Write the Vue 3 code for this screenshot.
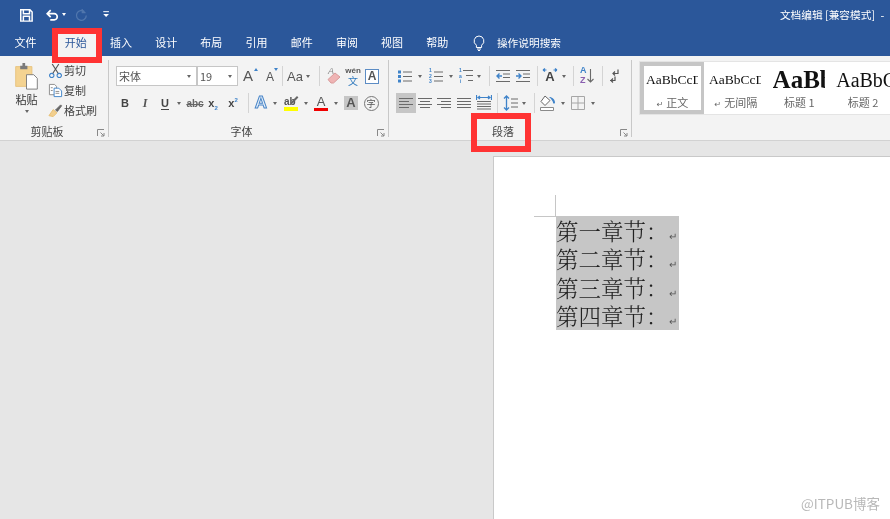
<script setup>
import { h } from 'vue'

const G = '#6a6a6a', B = '#3f83c9', L = '#8a8a8a'
const lines4 = (a, b) => `M${a} 3.5h${b} M${a} 6.5h${b} M${a} 9.5h${b} M${a} 12.5h${b}`
const icons = {
  save: [['#fff', 'none', 'M2 2h10.5L15 4.5V15H2z M5 2v4.5h7V2 M5 15V9.5h7V15', 1.7]],
  undo: [['#fff', 'none', 'M3 6.5h7.5a3.5 3.5 0 0 1 0 7H6 M6.5 2.5 2.5 6.5l4 4', 1.9]],
  redo: [['#5076ad', 'none', 'M12 4.2A5.6 5.6 0 1 0 14 8.5 M9.5 1.5v3.7h3.7', 1.5]],
  custom: [['#fff', 'none', 'M4 4.5h7', 1.2], ['none', '#fff', 'M4 7.5h7L7.5 11z']],
  bulb: [['#fff', 'none', 'M8 1a5 5 0 0 0-2.6 9.2V12.5h5.2v-2.3A5 5 0 0 0 8 1z M6 14h4 M7 15.5h2']],
  cut: [[B, 'none', 'M4 11a2.3 2.3 0 1 0 .01 0 M12 11a2.3 2.3 0 1 0 .01 0', 1.2], ['#555', 'none', 'M5.2 11 11.5 1 M10.8 11 4.5 1', 1.2]],
  copy: [[L, '#fff', 'M1.5 1.5h5.5l2 2v9H1.5z'], [B, '#fff', 'M6.5 5.5h5l3 3v6h-8z'], [L, 'none', 'M3 5h2 M3 8h2 M8 9h4 M8 11h4']],
  brush: [['#e8bf73', '#f2cf8e', 'M1 13.5 5.5 7l4 3.5-4 4z'], ['#666', '#666', 'M8 7.5 13.5 2l1 1L10 9z']],
  eraser: [['#d99a9a', '#efb4b4', 'M2 11.500 9 5l5 4-6.500 6H5z']],
  list: [['none', B, 'M1 2.5h3v3H1z M1 7h3v3H1z M1 11.500h3v3H1z'], [G, 'none', 'M6 4h9 M6 8.500h9 M6 13h9']],
  num: [[G, 'none', 'M6 4h9 M6 8.500h9 M6 13h9']],
  multi: [[G, 'none', 'M5 2.500h10 M8 7.500h7 M10 12.500h5']],
  dec: [[G, 'none', 'M1 2.500h14 M8 6h7 M8 9.500h7 M1 13.500h14'], [B, 'none', 'M7 8H2 M4.500 5.500 2 8l2.500 2.500', 1.4]],
  inc: [[G, 'none', 'M1 2.500h14 M8 6h7 M8 9.500h7 M1 13.500h14'], [B, 'none', 'M1 8h5 M3.500 5.500 6 8l-2.500 2.500', 1.4]],
  aspace: [[B, 'none', 'M1 2 4.500 2 M1 2l2-1.500M1 2l2 1.500 M15 2h-3.500 M15 2l-2-1.500M15 2l-2 1.500', 1.2]],
  sortar: [[G, 'none', 'M11.500 1v13 M8.500 11l3 3 3-3', 1.1]],
  pil: [['#555', 'none', 'M10 1.500v4H5 M7 3.500 5 5.500l2 2 M7 8.500v4H2 M5 10.500l-2 2 2 2', 1.2]],
  left: [[G, 'none', 'M1 3.500h14 M1 6.500h10 M1 9.500h14 M1 12.500h10']],
  center: [[G, 'none', 'M1 3.500h14 M3 6.500h10 M1 9.500h14 M3 12.500h10']],
  right: [[G, 'none', 'M1 3.500h14 M5 6.500h10 M1 9.500h14 M5 12.500h10']],
  just: [[G, 'none', lines4(1, 14)]],
  dist: [[B, 'none', 'M.5 0v5 M15.500 0v5 M2 2.500h12 M4 1 2 2.500 4 4 M12 1l2 1.500L12 4', 1.2], [G, 'none', 'M1 6.500h14 M1 9h14 M1 11.500h14 M1 14h14']],
  spacing: [[B, 'none', 'M3.500 1v14 M1 3.500l2.500-2.500L6 3.500 M1 12.500 3.500 15 6 12.500', 1.3], [G, 'none', 'M8 4h7 M8 8h7 M8 12h7']],
  shade: [[L, '#fff', 'M.5 15.500v-3h13v3z'], ['#666', '#fff', 'M5 1 1 6.500l4 4 5-5z'], ['none', B, 'M9 2c3.500 0 6 2.500 6 5.500 0 1.500-2 1.500-2 0 0-1-1.500-3.500-4-5.500z']],
  borders: [['#a6a6a6', 'none', 'M1.500 1.500h13v13h-13z M8 1.500v13 M1.500 8h13', 1]],
}
const Ico = (p) => h('svg', { width: p.s || 16, height: p.s || 16, viewBox: '0 0 16 16', fill: 'none', class: 'ico' },
  icons[p.n].map(([s, f, d, w]) => h('path', { d, stroke: s, fill: f, 'stroke-width': w || 1 })))
Ico.props = ['n', 's']

const tabs = ['文件', '开始', '插入', '设计', '布局', '引用', '邮件', '审阅', '视图', '帮助']
const clips = [{ i: 'cut', t: '剪切' }, { i: 'copy', t: '复制' }, { i: 'brush', t: '格式刷' }]
const arr = (w) => ({ w, arr: true })
const sep = (w) => ({ w, sep: true })
const fontA = [
  { w: 24, t: 'A', c: 'big', up: 1 }, { w: 16, t: 'A', c: 'small', down: 1 }, sep(8),
  { w: 18, t: 'Aa', c: 'aa' }, arr(8), sep(14),
  { w: 16, i: 'eraser', t: 'A', c: 'eraser' }, { w: 22, wen: true }, { w: 16, t: 'A', c: 'boxa' },
]
const fontB = [
  { w: 18, t: 'B', c: 'bold' }, { w: 22, t: 'I', c: 'ital' }, { w: 18, t: 'U', c: 'under' }, arr(10),
  { w: 22, t: 'abc', c: 'strike' }, { w: 14, t: 'x', c: 'bold', sub: '2' }, { w: 26, t: 'x', c: 'bold', sup: '2' }, sep(4),
  { w: 22, t: 'A', c: 'fx' }, arr(6), { w: 26, t: 'ab', c: 'hl' }, arr(4),
  { w: 26, t: 'A', c: 'redA' }, arr(4), { w: 26, t: 'A', c: 'grayA' }, { w: 14, t: '字', c: 'circ' },
]
const paraA = [
  { w: 18, i: 'list' }, arr(12), { w: 20, i: 'num', n: '1 2 3', c: 'ol' }, arr(10), { w: 20, i: 'multi', n: '1 a i', c: 'ol' }, arr(6), sep(14),
  { w: 14, i: 'dec' }, { w: 26, i: 'inc' }, sep(2),
  { w: 24, i: 'aspace', t: 'A', c: 'spA' }, arr(4), sep(14), { w: 14, i: 'sortar', az: true }, sep(16), { w: 12, i: 'pil' },
]
const paraB = [
  { w: 20, i: 'left', on: true }, { w: 18, i: 'center' }, { w: 20, i: 'right' }, { w: 20, i: 'just' }, { w: 20, i: 'dist' }, sep(6),
  { w: 22, i: 'spacing' }, arr(4), sep(16), { w: 12, i: 'shade' }, arr(18), { w: 12, i: 'borders' }, arr(18),
]
const styles = [
  { s: 'AaBbCcDd', c: 'st-n', l: '正文', m: true, on: true },
  { s: 'AaBbCcDd', c: 'st-n', l: '无间隔', m: true },
  { s: 'AaBb', c: 'st-h1', l: '标题 1' },
  { s: 'AaBbC', c: 'st-h2', l: '标题 2' },
]
const chapters = ['第一章节：', '第二章节：', '第三章节：', '第四章节：']
const rows = { fontB, paraA, paraB }
</script>

<template>
  <div class="app">
    <header class="title">
      <div class="qat">
        <Ico n="save" s="14" class="q-save" />
        <Ico n="undo" s="14" class="q-undo" />
        <span class="arrow white q-a"></span>
        <Ico n="redo" s="14" class="q-redo" />
        <Ico n="custom" s="13" class="q-custom" />
        <span class="doc">文档编辑 [兼容模式]</span>
        <span class="dash">-</span>
      </div>
      <nav class="tabs">
        <span v-for="t in tabs" :key="t" class="tab" :class="{ active: t === '开始' }">{{ t }}</span>
        <Ico n="bulb" class="bulb" />
        <span class="search">操作说明搜索</span>
      </nav>
    </header>

    <section class="ribbon">
      <div class="group g-clip">
        <div class="clip">
          <div class="paste">
            <svg width="25" height="27" viewBox="0 0 26 30" class="ico">
              <path d="M1 4h18v22H1z" fill="#f4d391" stroke="#e7c27c" />
              <path d="M6 3h8v4H6z M8.500 0h3v3h-3z" fill="#7a7a7a" />
              <path d="M13 13h8l4 4v12H13z" fill="#fff" stroke="#777" />
            </svg>
            <span class="paste-l">粘贴</span>
            <span class="arrow"></span>
          </div>
          <div class="clip-list">
            <div v-for="c in clips" :key="c.t" class="clip-row">
              <Ico :n="c.i" s="15" />
              <span>{{ c.t }}</span>
            </div>
          </div>
        </div>
        <div class="label label-clip">剪贴板</div>
        <svg class="launch" width="8" height="8" viewBox="0 0 8 8"><path d="M.5 7V.5H7 M3.500 3.500l3.500 3.500 M7 4v3H4" fill="none" stroke="#888" /></svg>
      </div>

      <div class="group g-font">
        <div class="row">
          <div class="select s-font"><span>宋体</span><i class="arrow"></i></div>
          <div class="select s-size"><span>19</span><i class="arrow"></i></div>
          <div v-for="(it, n) in fontA" :key="n" class="tool" :style="{ width: it.w + 'px' }">
            <i v-if="it.sep" class="sep"></i>
            <i v-else-if="it.arr" class="arrow"></i>
            <div v-else-if="it.wen" class="wen"><span>wén</span><b>文</b></div>
            <template v-else>
              <Ico v-if="it.i" :n="it.i" />
              <span :class="it.c">{{ it.t }}</span>
              <i v-if="it.up" class="mini up"></i>
              <i v-if="it.down" class="mini down"></i>
            </template>
          </div>
        </div>
        <div class="row row2">
          <div v-for="(it, n) in rows.fontB" :key="n" class="tool" :style="{ width: it.w + 'px' }">
            <i v-if="it.sep" class="sep"></i>
            <i v-else-if="it.arr" class="arrow"></i>
            <span v-else :class="it.c">{{ it.t }}<sub v-if="it.sub">{{ it.sub }}</sub><sup v-if="it.sup">{{ it.sup }}</sup></span>
          </div>
        </div>
        <div class="label">字体</div>
        <svg class="launch" width="8" height="8" viewBox="0 0 8 8"><path d="M.5 7V.5H7 M3.500 3.500l3.500 3.500 M7 4v3H4" fill="none" stroke="#888" /></svg>
      </div>

      <div class="group g-para">
        <div v-for="(r, k) in [rows.paraA, rows.paraB]" :key="k" class="row" :class="{ row2: k === 1 }">
          <div v-for="(it, n) in r" :key="n" class="tool" :class="{ on: it.on }" :style="{ width: it.w + 'px' }">
            <i v-if="it.sep" class="sep"></i>
            <i v-else-if="it.arr" class="arrow"></i>
            <template v-else>
              <Ico :n="it.i" />
              <span v-if="it.n" :class="it.c">{{ it.n }}</span>
              <span v-if="it.t" :class="it.c">{{ it.t }}</span>
              <span v-if="it.az" class="az"><b>A</b><em>Z</em></span>
            </template>
          </div>
        </div>
        <div class="label">段落</div>
        <svg class="launch" width="8" height="8" viewBox="0 0 8 8"><path d="M.5 7V.5H7 M3.500 3.500l3.500 3.500 M7 4v3H4" fill="none" stroke="#888" /></svg>
      </div>

      <div class="gallery">
        <div v-for="s in styles" :key="s.l" class="style" :class="{ sel: s.on }">
          <div class="sample" :class="s.c">{{ s.s }}</div>
          <div class="style-l"><i v-if="s.m">↵</i>{{ s.l }}</div>
        </div>
      </div>
    </section>

    <main class="work">
      <div class="page">
        <i class="crop"></i>
        <div class="selection">
          <div v-for="c in chapters" :key="c" class="line">{{ c }}<i>↵</i></div>
        </div>
      </div>
      <span class="mark">@ITPUB博客</span>
    </main>

    <i class="red red-1"></i>
    <i class="red red-2"></i>
  </div>
</template>

<style>
html, body { margin: 0; background: #e6e6e6; }
</style>

<style scoped>
.app {
  position: relative; width: 890px; height: 519px; overflow: hidden;
  display: flex; flex-direction: column; background: #e6e6e6;
  font-family: "Noto Sans CJK SC", "Liberation Sans", sans-serif; font-size: 11px; color: #444;
  filter: blur(.35px);
}
i { font-style: normal; }
.ico { display: block; flex-shrink: 0; }

.title { height: 56px; flex-shrink: 0; background: #2b579a; color: #fff; }
.qat { height: 29px; display: flex; align-items: center; padding-left: 19px; }
.q-undo { margin-left: 12px; }
.arrow { display: block; width: 0; height: 0; border: 2.5px solid transparent; border-top: 3px solid #666; border-bottom: 0; flex-shrink: 0; }
.arrow.white { border-top-color: #fff; }
.q-a { margin-left: 3px; }
.q-redo { margin-left: 8px; }
.q-custom { margin-left: 12px; }
.doc { margin-left: auto; font-size: 10.700px; line-height: 14px; }
.dash { width: 15px; text-align: center; }
.tabs { height: 27px; display: flex; align-items: center; padding-left: 3px; }
.tab { width: 45.200px; text-align: center; line-height: 14px; height: 100%; display: flex; align-items: center; justify-content: center; padding-bottom: 1px; box-sizing: border-box; }
.tab:first-child { margin-right: 5px; }
.tab.active { background: #f3f3f3; color: #2b579a; }
.bulb { margin-left: 11px; }
.search { margin-left: 10px; font-size: 10.700px; }

.ribbon { height: 85px; flex-shrink: 0; box-sizing: border-box; background: #f3f3f3; border-bottom: 1px solid #d2d2d2; padding-top: 4px; display: flex; align-items: flex-start; }
.group { position: relative; height: 77px; box-sizing: border-box; border-right: 1px solid #c8c8c8; flex-shrink: 0; }
.g-clip { width: 109px; }
.g-font { width: 280px; padding-left: 7px; }
.g-para { width: 243px; padding-left: 7px; }
.row { height: 20px; margin-top: 6px; display: flex; align-items: center; }
.row2 { margin-top: 7px; }
.label { position: absolute; left: 0; right: 14px; top: 64px; height: 14px; line-height: 14px; text-align: center; color: #444; }
.launch { position: absolute; right: 3px; top: 69px; }

.clip { display: flex; height: 60px; }
.paste { width: 43px; margin-left: 5px; display: flex; flex-direction: column; align-items: center; padding-top: 3px; box-sizing: border-box; }
.paste-l { line-height: 14px; margin-top: 2px; color: #333; }
.paste .arrow { margin-top: 4px; }
.clip-list { display: flex; flex-direction: column; }
.clip-row { height: 20px; display: flex; align-items: center; gap: 1px; }

.select { height: 20px; box-sizing: border-box; background: #fff; border: 1px solid #c6c6c6; display: flex; align-items: center; justify-content: space-between; padding: 0 5px 0 2px; line-height: 14px; color: #555; }
.s-font { width: 81px; }
.s-size { width: 41px; margin-left: 0; }
.tool { position: relative; height: 20px; flex-shrink: 0; display: flex; align-items: center; justify-content: center; }
.tool.on { background: #c6c6c6; }
.tool > .ico { flex-shrink: 0; }
.sep { display: block; width: 1px; height: 20px; background: #d4d4d4; flex-shrink: 0; }
.mini { position: absolute; right: 2px; top: 2px; width: 0; height: 0; border: 2.5px solid transparent; }
.mini.up { border-bottom: 3px solid #3f83c9; border-top: 0; right: 4px; }
.mini.down { border-top: 3px solid #3f83c9; border-bottom: 0; right: 0; }

.big, .small, .aa, .bold, .ital, .under, .strike, .fx, .hl, .redA, .grayA, .spA, .boxa, .eraser, .az { font-family: "Liberation Sans", sans-serif; }
.big { font-size: 15px; color: #555; line-height: 18px; margin-right: 4px; }
.small { font-size: 12px; color: #555; line-height: 18px; margin-top: 2px; }
.aa { font-size: 13px; color: #555; }
.bold { font-weight: 700; font-size: 11px; color: #444; }
.bold sub, .bold sup { font-size: 6px; color: #3f83c9; line-height: 0; }
.ital { font-style: italic; font-family: "Liberation Serif", serif; font-weight: 700; font-size: 12px; color: #555; }
.under { font-weight: 700; font-size: 11px; color: #444; border-bottom: 1px solid #444; line-height: 12px; }
.strike { font-size: 10px; font-weight: 700; color: #666; text-decoration: line-through; }
.fx { font-size: 17px; font-weight: 700; color: #e8f1fa; -webkit-text-stroke: 1px #4a86c8; }
.hl { position: relative; font-size: 10px; font-weight: 700; color: #555; border-bottom: 4px solid #ffff00; line-height: 11px; width: 14px; }
.hl::after { content: ""; position: absolute; right: -1px; top: 3px; width: 9px; height: 2px; background: #666; transform: rotate(-45deg); }
.redA { font-size: 13px; color: #555; border-bottom: 3px solid #f00000; line-height: 13px; width: 14px; text-align: center; }
.grayA { width: 14px; height: 14px; background: #c6c6c6; text-align: center; font-size: 13px; font-weight: 700; color: #555; line-height: 14px; }
.circ { display: block; width: 13px; height: 13px; border: 1px solid #777; border-radius: 50%; text-align: center; font-size: 9px; line-height: 13px; color: #555; flex-shrink: 0; }
.wen { display: flex; flex-direction: column; align-items: center; font-family: "Liberation Sans", sans-serif; }
.wen span { font-size: 8px; line-height: 9px; font-weight: 700; color: #555; }
.wen b { font-size: 10px; line-height: 11px; font-weight: 400; color: #2f79bd; font-family: "Noto Sans CJK SC", sans-serif; }
.boxa { display: block; width: 12px; height: 13px; border: 1px solid #5c8cc4; font-size: 12px; font-weight: 700; text-align: center; line-height: 13px; color: #555; background: #fff; flex-shrink: 0; }
.eraser { position: absolute; left: 2px; top: 0; font-size: 9px; color: #888; font-style: italic; line-height: 11px; }
.ol { position: absolute; left: 2px; top: 2px; width: 5px; font-size: 5px; line-height: 5.500px; color: #3f83c9; font-family: "Liberation Sans", sans-serif; font-weight: 700; word-spacing: 5px; text-align: center; }
.spA { position: absolute; left: 4px; top: 4px; width: 16px; text-align: center; font-size: 13px; font-weight: 700; color: #444; line-height: 14px; }
.az { position: absolute; left: 0; top: 0; display: flex; flex-direction: column; font-size: 9px; line-height: 9.500px; font-weight: 700; }
.az b { color: #3f83c9; }
.az em { color: #8a5fb0; font-style: normal; }

.gallery { margin: 2px 0 0 8px; width: 250px; height: 52px; background: #fff; display: flex; flex-shrink: 0; box-shadow: 0 0 0 1px #e4e4e4; overflow: hidden; }
.style { width: 63.600px; flex-shrink: 0; box-sizing: border-box; text-align: center; overflow: hidden; padding-top: 4px; }
.style.sel { width: 64px; border: 4px solid #c6c6c6; border-right-width: 3px; padding-top: 0; }
.sample { height: 28px; line-height: 28px; overflow: hidden; white-space: nowrap; color: #111; text-align: left; }
.st-n { font-family: "Liberation Serif", serif; font-size: 13.500px; width: 52px; margin-left: 2px; }
.style:not(:first-child) .st-n { margin-left: 5px; }
.st-h1 { font-family: "Liberation Serif", serif; font-size: 25px; font-weight: 700; margin-left: 5px; width: 52px; }
.st-h2 { font-family: "Liberation Serif", serif; font-size: 20px; margin-left: 5px; width: 80px; }
.style-l { color: #666; line-height: 14px; font-size: 11px; margin-top: 1px; }
.style-l i { font-size: 8px; margin-right: 3px; color: #666; font-family: "DejaVu Sans", sans-serif; }

.work { position: relative; flex: 1; min-height: 0; }
.page { position: relative; margin: 15px 0 0 493px; height: 400px; box-sizing: border-box; background: #fff; border: 1px solid #c9c9c9; border-right: 0; padding: 59px 0 0 62px; }
.crop { position: absolute; left: 40px; top: 38px; width: 21px; height: 21px; border-right: 1px solid #c6c6c6; border-bottom: 1px solid #c6c6c6; }
.selection { width: 123px; height: 113.500px; background: #c6c6c6; }
.line { height: 28.400px; line-height: 28.400px; font-family: "Noto Serif CJK SC", "Noto Sans CJK SC", serif; font-size: 22.500px; font-weight: 300; color: #222; white-space: nowrap; overflow: hidden; }
.line i { font-family: "DejaVu Sans", sans-serif; font-size: 10px; color: #555; }
.mark { position: absolute; right: 10px; bottom: 8px; font-size: 13.500px; line-height: 16px; color: #b8b8b8; }

.red { position: absolute; box-sizing: border-box; border: 6px solid #ff3333; pointer-events: none; }
.red-1 { left: 52px; top: 28px; width: 50px; height: 35px; }
.red-2 { left: 471px; top: 113px; width: 60px; height: 39px; }
</style>
